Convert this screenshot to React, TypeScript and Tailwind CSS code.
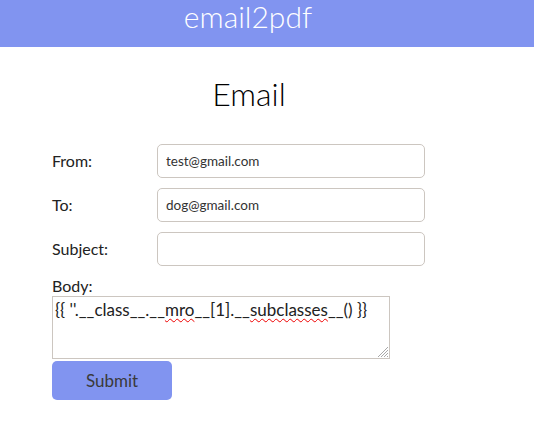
import React from "react";

const font = { fontFamily: "Lato, 'Open Sans', sans-serif" };

function Row({ label, value }: { label: string; value: string }) {
  return (
    <div className="flex items-center h-[34px] mb-[10px]">
      <label className="w-[105px] text-[16px] text-[#222]">{label}</label>
      <input
        readOnly
        value={value}
        className="w-[268px] h-[34px] rounded-[5px] border border-[#ccc6c0] px-[8px] text-[13.5px] text-[#333] outline-none"
      />
    </div>
  );
}

export default function App() {
  return (
    <div className="w-[534px] h-[433px] bg-white" style={font}>
      <header className="h-[47px] bg-[#8194f0] flex justify-center pr-[38px]">
        <h2 className="text-white text-[30px] font-light leading-[32px]">email2pdf</h2>
      </header>

      <h1 className="text-center text-[32px] font-light text-black mt-[27px] leading-[40px] pr-[36px]">Email</h1>

      <form className="pl-[52px] mt-[30px]" onSubmit={(e) => e.preventDefault()}>
        <Row label="From:" value="test@gmail.com" />
        <Row label="To:" value="dog@gmail.com" />
        <Row label="Subject:" value="" />

        <div className="text-[16px] text-[#222] leading-[20px] mt-[2px]">Body:</div>
        <div className="relative w-[338px] h-[63px] border border-[#ccc6c0] px-[2px] py-[2px] text-[17px] text-[#222] leading-[22px]">
          {"{{ ''.__class__.__"}
          <span className="underline decoration-wavy decoration-[#e00] decoration-1 underline-offset-2">mro</span>
          {"__[1].__"}
          <span className="underline decoration-wavy decoration-[#e00] decoration-1 underline-offset-2">subclasses</span>
          {"__() }}"}
          {/* resize grip */}
          <svg className="absolute right-[1px] bottom-[1px]" width="12" height="12" viewBox="0 0 12 12">
            <path d="M12 2 L2 12 M12 5 L5 12 M12 8 L8 12 M12 11 L11 12" stroke="#a8a8a8" strokeWidth="1" />
          </svg>
        </div>

        <button
          type="submit"
          className="mt-[2px] w-[120px] h-[39px] rounded-[5px] bg-[#8194f0] text-[17px] text-[#3a3a3a]"
        >
          Submit
        </button>
      </form>
    </div>
  );
}
